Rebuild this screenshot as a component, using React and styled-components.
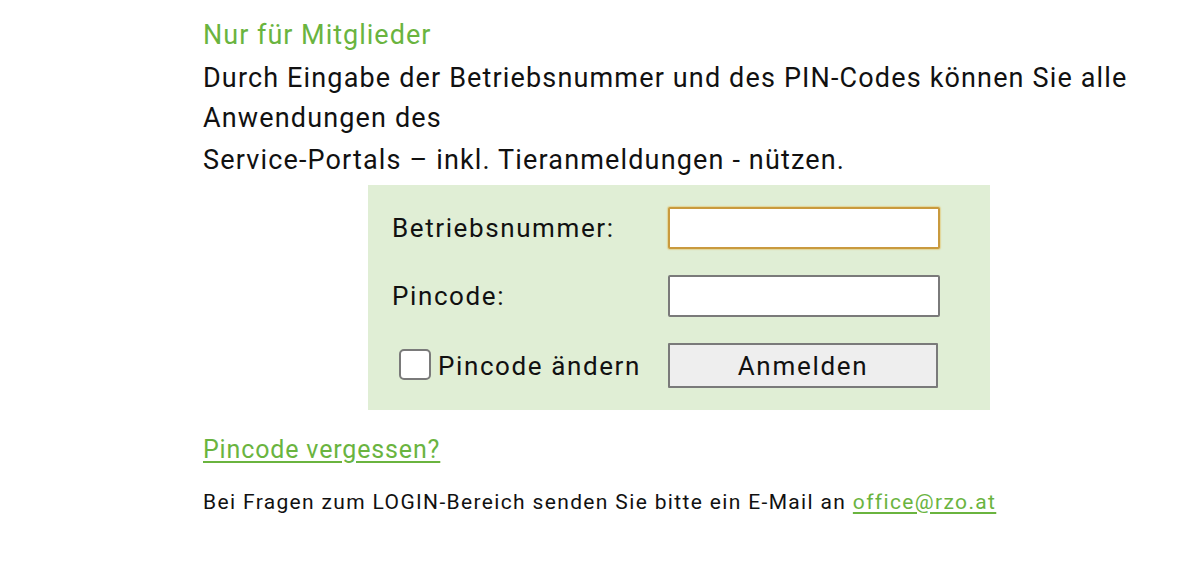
import React from "react";
import styled, { createGlobalStyle } from "styled-components";

const Global = createGlobalStyle`
  html, body { margin: 0; padding: 0; background: #fff; }
  body { font-family: Roboto, "Liberation Sans", sans-serif; color: #111; }
`;

const Page = styled.div`
  padding: 18px 0 0 203px;
  width: 980px;
`;

const Heading = styled.h2`
  margin: 0;
  font-size: 27px;
  font-weight: 400;
  letter-spacing: 1px;
  color: #6ab43f;
  line-height: 34px;
`;

const Para = styled.p`
  margin: 6px 0 0;
  font-size: 27px;
  letter-spacing: 1.15px;
  line-height: 40px;
`;

const Para2 = styled(Para)`
  margin-top: 2px;
`;

const Box = styled.div`
  margin: 5px 0 0 165px;
  width: 622px;
  height: 225px;
  background: #e0eed5;
  box-sizing: border-box;
  padding: 22px 0 0 24px;
  display: grid;
  grid-template-columns: 276px 272px;
  grid-template-rows: 42px 42px auto;
  row-gap: 26px;
  align-items: center;
`;

const Label = styled.label`
  font-size: 26px;
  letter-spacing: 1.6px;
`;

const Input = styled.input`
  box-sizing: border-box;
  width: 272px;
  height: 42px;
  border: 2px solid ${(p) => (p.$focus ? "#c99a3e" : "#7a7a7a")};
  box-shadow: ${(p) => (p.$focus ? "0 0 1px 1px rgba(230,190,90,0.5)" : "none")};
  background: #fff;
  border-radius: 2px;
  outline: none;
`;

const CheckLabel = styled.label`
  display: flex;
  align-items: flex-end;
  gap: 7px;
  font-size: 26px;
  letter-spacing: 1.6px;
  padding-left: 7px;
  margin-top: 6px;
  line-height: 30px;
  align-self: start;
`;

const CheckBox = styled.span`
  flex: none;
  width: 32px;
  height: 31px;
  border: 2px solid #7a7a7a;
  border-radius: 5px;
  background: #fff;
  box-sizing: border-box;
  margin-bottom: 1px;
`;

const Button = styled.button`
  box-sizing: border-box;
  width: 270px;
  height: 45px;
  align-self: start;
  border: 2px solid #7a7a7a;
  background: #eeeeee;
  font-family: Roboto, "Liberation Sans", sans-serif;
  font-size: 26px;
  letter-spacing: 1.7px;
  color: #111;
  border-radius: 1px;
  padding: 0;
`;

const Forgot = styled.a`
  display: inline-block;
  margin-top: 25px;
  font-size: 25px;
  letter-spacing: 0.85px;
  color: #6ab43f;
  text-decoration: underline;
  text-underline-offset: 3px;
`;

const Footer = styled.p`
  margin: 24px 0 0;
  font-size: 21px;
  letter-spacing: 1.35px;
  line-height: 28px;
`;

const Link = styled.a`
  color: #6ab43f;
  text-decoration: underline;
  text-underline-offset: 3px;
`;

export default function App() {
  return (
    <>
      <Global />
      <Page>
        <Heading>Nur für Mitglieder</Heading>
        <Para>
          Durch Eingabe der Betriebsnummer und des PIN-Codes können Sie alle
          Anwendungen des
        </Para>
        <Para2>Service-Portals – inkl. Tieranmeldungen - nützen.</Para2>
        <Box>
          <Label>Betriebsnummer:</Label>
          <Input $focus />
          <Label>Pincode:</Label>
          <Input type="password" />
          <CheckLabel>
            <CheckBox />
            Pincode ändern
          </CheckLabel>
          <Button>Anmelden</Button>
        </Box>
        <Forgot href="#">Pincode vergessen?</Forgot>
        <Footer>
          Bei Fragen zum LOGIN-Bereich senden Sie bitte ein E-Mail an{" "}
          <Link href="#">office@rzo.at</Link>
        </Footer>
      </Page>
    </>
  );
}
